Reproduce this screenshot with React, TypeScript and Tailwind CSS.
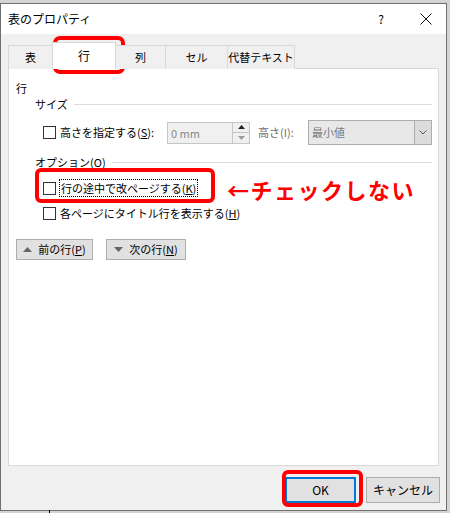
const FONT = { fontFamily: '"Meiryo UI", "Noto Sans CJK JP", sans-serif' };

export default function App() {
  return (
    <div
      className="relative h-[513px] w-[450px] overflow-hidden bg-[#d4d4d4] text-[11px] text-black"
      style={FONT}
    >
      <div className="mt-[3px] flex h-[508px] w-[447px] flex-col border border-[#6f6f6f] bg-[#f0f0f0]">
        <TitleBar />
        <Tabs />
        <div className="mx-[7px] h-[398px] border border-[#d9d9d9] bg-white">
          <div className="pl-[7px] pt-[11px] leading-[16px]">行</div>
          <GroupHeader label="サイズ" />
          <div className="mt-[8px] flex h-[25px] items-center pl-[34px]">
            <Checkbox />
            <span className="ml-[4px] w-[107px] whitespace-nowrap">
              高さを指定する(<u>S</u>):
            </span>
            <div className="flex h-[22px] w-[83px] items-stretch border border-[#c6c6c6] bg-[#f0f0f0]">
              <span className="flex-1 pl-[3px] leading-[20px] text-[#8a8a8a]">0 mm</span>
              <div className="flex w-[17px] flex-col border-l border-[#c6c6c6]">
                <div className="flex flex-1 items-center justify-center border-b border-[#c6c6c6]">
                  <svg width="7" height="4" viewBox="0 0 7 4">
                    <path d="M0 4h7L3.5 0z" fill="#222" />
                  </svg>
                </div>
                <div className="flex flex-1 items-center justify-center">
                  <svg width="7" height="4" viewBox="0 0 7 4">
                    <path d="M0 0h7L3.5 4z" fill="#9a9a9a" />
                  </svg>
                </div>
              </div>
            </div>
            <span className="ml-[8px] w-[50px] whitespace-nowrap text-[#6d6d6d]">高さ(I):</span>
            <div className="flex h-[25px] w-[124px] border border-[#adadad] bg-[#e8e8e8]">
              <span className="flex-1 pl-[3px] leading-[23px] text-[#7a7a7a]">最小値</span>
              <div className="flex w-[17px] items-center justify-center border-l border-[#adadad] bg-[#dcdcdc]">
                <svg width="8" height="5" viewBox="0 0 8 5">
                  <path d="M0.5 0.5L4 4L7.5 0.5" fill="none" stroke="#555" strokeWidth="1" />
                </svg>
              </div>
            </div>
          </div>
          <div className="mt-[9px]">
            <GroupHeader label="オプション(O)" />
          </div>
          <div className="mt-[9px] flex h-[18px] items-center pl-[34px]">
            <Checkbox />
            <span className="ml-[3px] whitespace-nowrap border border-dotted border-black px-[1px] leading-[16px]">
              行の途中で改ページする(<u>K</u>)
            </span>
          </div>
          <div className="mt-[7px] flex h-[18px] items-center pl-[34px]">
            <Checkbox />
            <span className="ml-[4px] whitespace-nowrap">
              各ページにタイトル行を表示する(<u>H</u>)
            </span>
          </div>
          <div className="mt-[17px] flex gap-[13px] pl-[7px]">
            <NavButton up label="前の行" accel="P" w="w-[77px]" />
            <NavButton label="次の行" accel="N" w="w-[80px]" />
          </div>
        </div>
        <div className="mr-[6px] mt-[11px] flex justify-end gap-[10px]">
          <button className="h-[26px] w-[71px] border-2 border-[#0078d7] bg-[#e1e1e1] text-[12px]">
            OK
          </button>
          <button className="h-[26px] w-[74px] border border-[#adadad] bg-[#e1e1e1] text-[12px]">
            キャンセル
          </button>
        </div>
      </div>

      {/* 赤い注釈 */}
      <div className="absolute left-[53px] top-[36px] h-[38px] w-[72px] rounded-[7px] border-[4px] border-[#ff0000]" />
      <div className="absolute left-[35px] top-[168px] h-[35px] w-[180px] rounded-[6px] border-[4px] border-[#ff0000]" />
      <div className="absolute left-[282px] top-[470px] h-[37px] w-[81px] rounded-[6px] border-[4px] border-[#ff0000]" />
      <div
        className="absolute left-[227px] top-[175px] whitespace-nowrap text-[22px] font-bold leading-[28px] tracking-[1.5px] text-[#ff0000]"
      >
        ←チェックしない
      </div>
      <div className="absolute left-[49px] top-[510px] h-[3px] w-px bg-black" />
    </div>
  );
}

function TitleBar() {
  return (
    <div className="flex h-[30px] items-center bg-white pl-[7px]">
      <span className="text-[12px]">表のプロパティ</span>
      <span className="ml-auto mr-[36px] text-[12px]">?</span>
      <svg width="12" height="12" viewBox="0 0 12 12" className="mr-[14px]">
        <path d="M0.5 0.5L11.5 11.5M11.5 0.5L0.5 11.5" stroke="#111" strokeWidth="1" />
      </svg>
    </div>
  );
}

function Tabs() {
  const tabs = [
    { label: "表", w: "w-[45px]" },
    { label: "行", w: "w-[64px]", active: true },
    { label: "列", w: "w-[51px]" },
    { label: "セル", w: "w-[63px]" },
    { label: "代替テキスト", w: "w-[68px]" },
  ];
  return (
    <div className="relative z-10 -mb-px flex items-end pl-[8px] pt-[8px]">
      {tabs.map((t) =>
        t.active ? (
          <div
            key={t.label}
            className={`-ml-px flex h-[27px] ${t.w} items-center justify-center whitespace-nowrap border border-b-0 border-[#d9d9d9] bg-white text-[12px]`}
          >
            {t.label}
          </div>
        ) : (
          <div
            key={t.label}
            className={`-ml-px flex h-[24px] ${t.w} items-center justify-center whitespace-nowrap border border-b-0 border-[#d9d9d9] bg-[#f0f0f0] text-[11px]`}
          >
            {t.label}
          </div>
        ),
      )}
    </div>
  );
}

function GroupHeader({ label }: { label: string }) {
  return (
    <div className="flex h-[16px] items-center gap-[6px] pl-[26px] pr-[6px]">
      <span className="whitespace-nowrap">{label}</span>
      <div className="h-px flex-1 bg-[#dcdcdc]" />
    </div>
  );
}

function Checkbox() {
  return <span className="inline-block h-[13px] w-[13px] shrink-0 border border-[#333] bg-white" />;
}

function NavButton({
  up,
  label,
  accel,
  w,
}: {
  up?: boolean;
  label: string;
  accel: string;
  w: string;
}) {
  return (
    <button
      className={`flex h-[21px] ${w} items-center justify-center gap-[6px] border border-[#adadad] bg-[#e1e1e1] text-[11px]`}
    >
      <svg width="9" height="5" viewBox="0 0 9 5">
        {up ? <path d="M0 5h9L4.5 0z" fill="#666" /> : <path d="M0 0h9L4.5 5z" fill="#666" />}
      </svg>
      <span>
        {label}(<u>{accel}</u>)
      </span>
    </button>
  );
}
